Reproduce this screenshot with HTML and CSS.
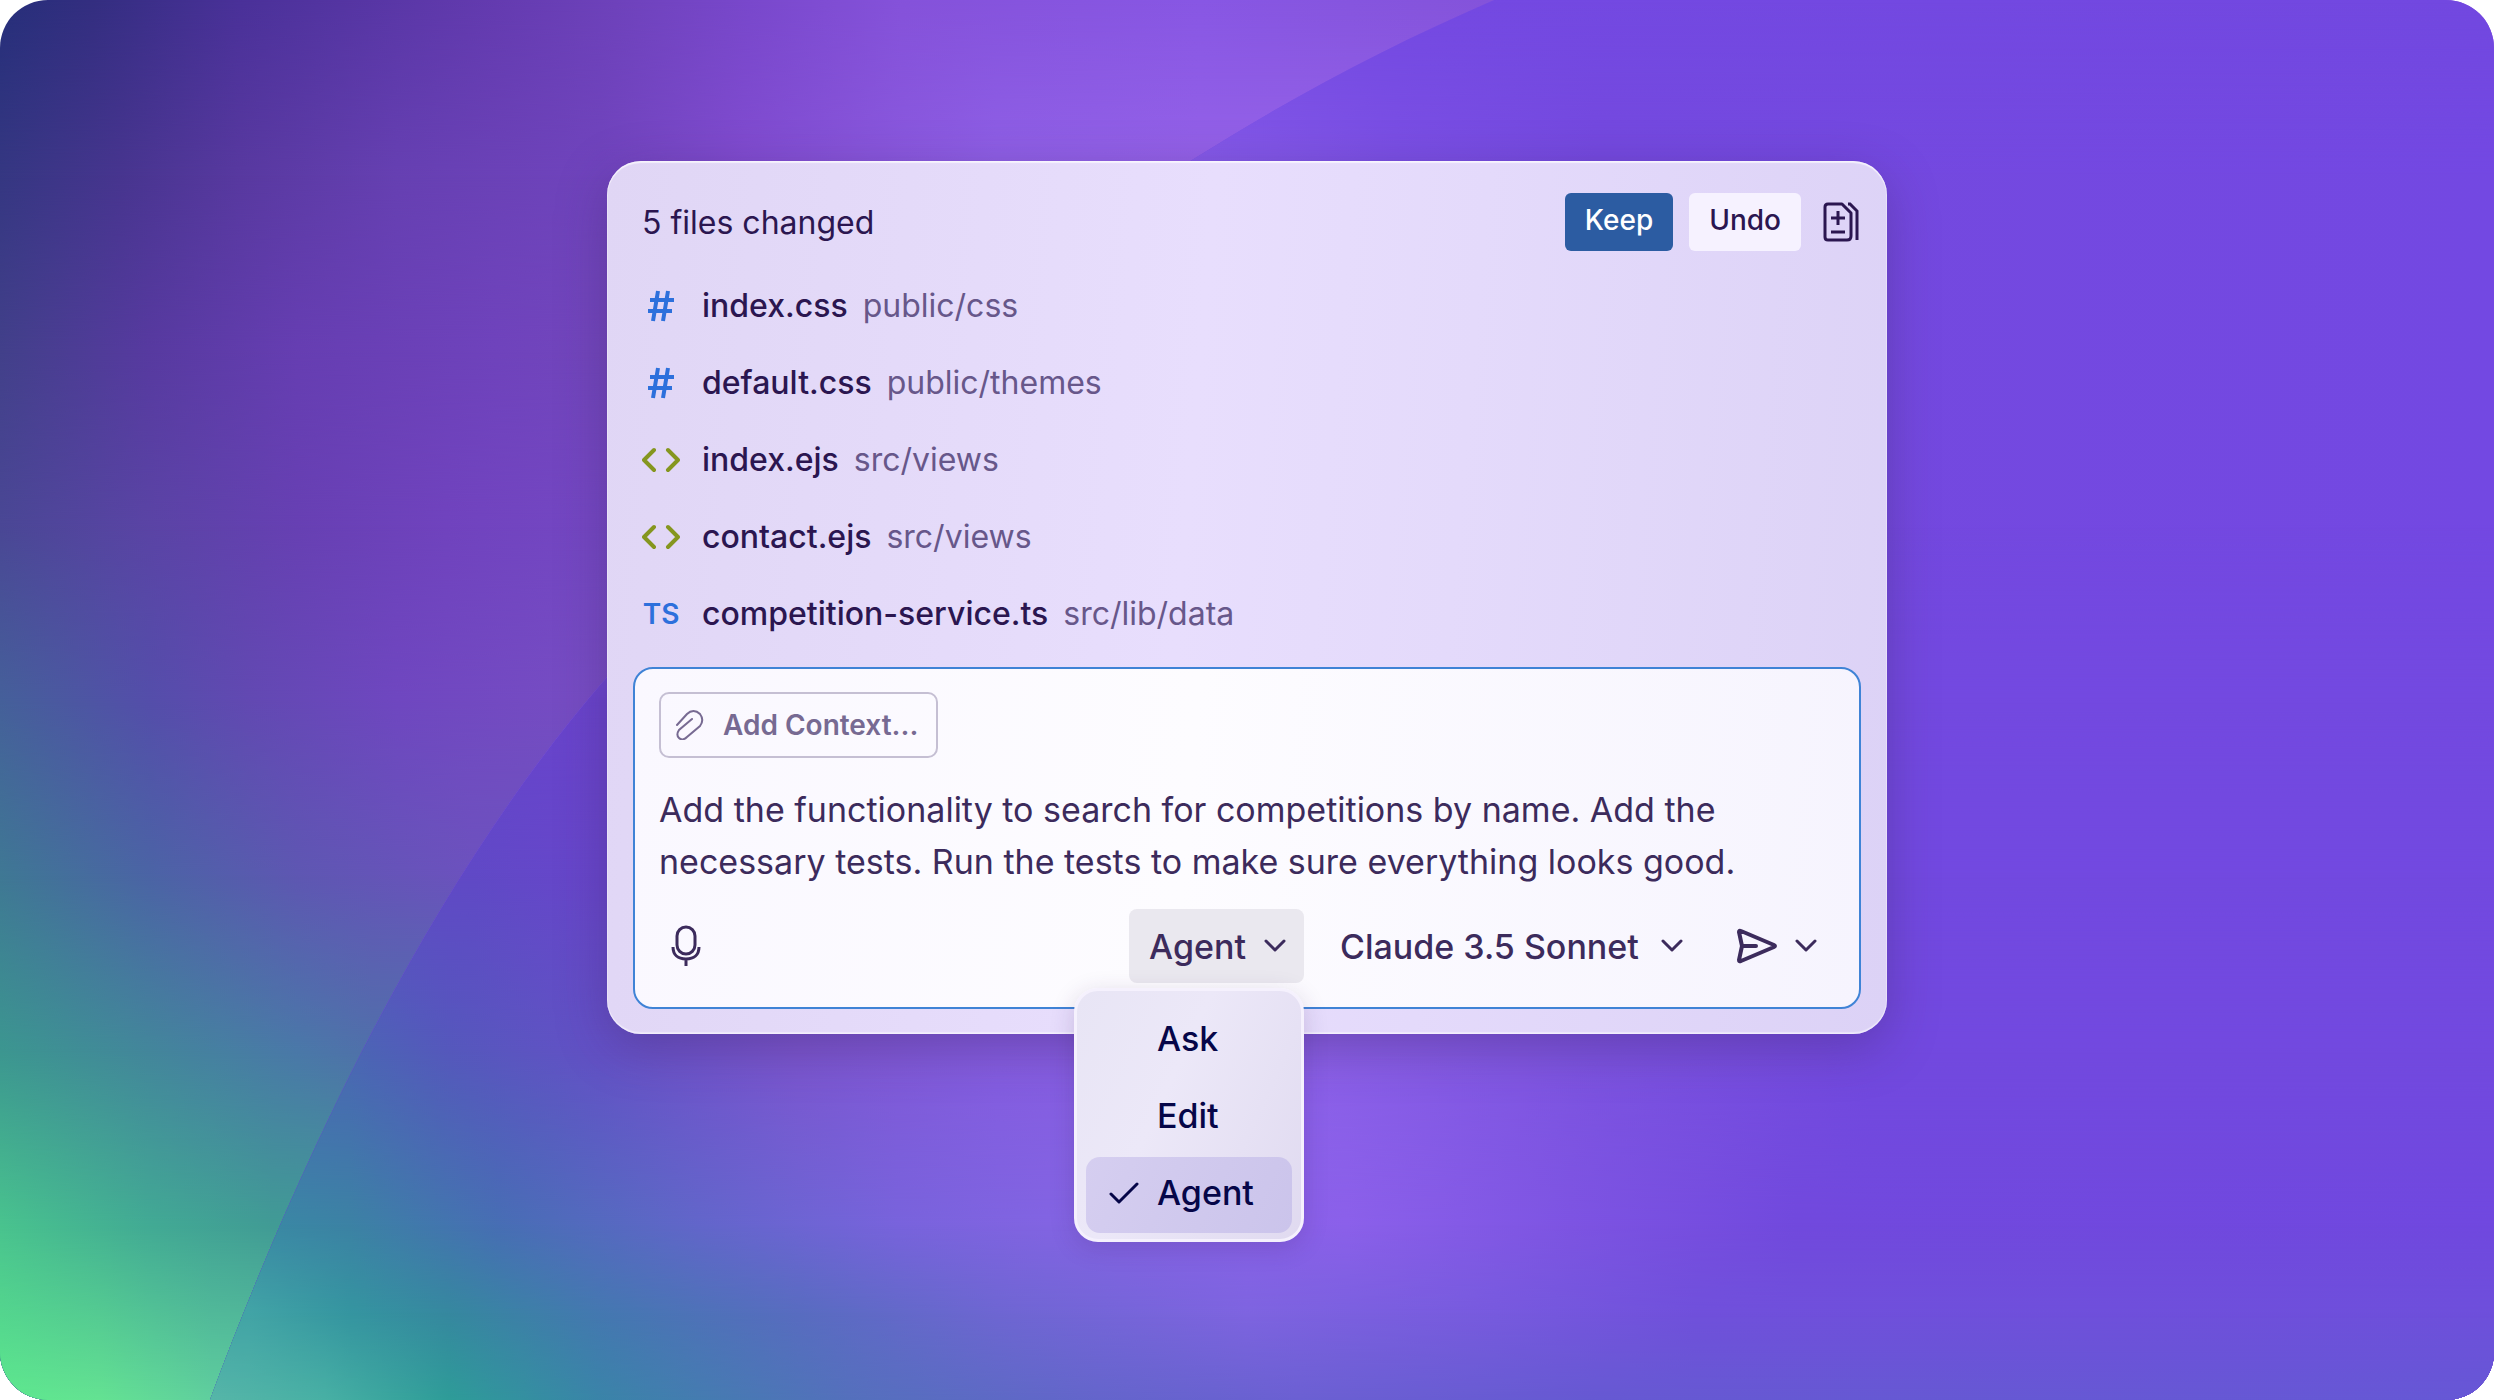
FILE: index.html
```html
<!DOCTYPE html>
<html lang="en">
<head>
<meta charset="utf-8">
<meta name="viewport" content="width=device-width, initial-scale=1">
<title>Agent mode</title>
<link rel="stylesheet" href="styles.css">
</head>
<body>
<main class="scene">
  <svg class="backdrop" viewBox="0 0 2494 1400" preserveAspectRatio="none" aria-hidden="true">
    <defs>
      <!-- Outer area: one horizontal gradient per row -->
      <linearGradient id="o0" gradientUnits="userSpaceOnUse" x1="0" x2="1500" y1="0" y2="0"><stop offset="0" stop-color="#262f7a"/><stop offset=".06" stop-color="#332e80"/><stop offset=".16" stop-color="#4a3199"/><stop offset=".33" stop-color="#643bb0"/><stop offset=".41" stop-color="#6e42bb"/><stop offset=".5" stop-color="#7948cc"/><stop offset=".6" stop-color="#8552da"/><stop offset=".8" stop-color="#8857e4"/><stop offset="1" stop-color="#8453da"/></linearGradient>
      <linearGradient id="o1" gradientUnits="userSpaceOnUse" x1="0" x2="1200" y1="0" y2="0"><stop offset="0" stop-color="#353782"/><stop offset=".1" stop-color="#47358f"/><stop offset=".2" stop-color="#5839a0"/><stop offset=".33" stop-color="#6640b2"/><stop offset=".5" stop-color="#7044bd"/><stop offset=".62" stop-color="#814cd0"/><stop offset=".83" stop-color="#8f60e6"/><stop offset="1" stop-color="#9562e8"/></linearGradient>
      <linearGradient id="o2" gradientUnits="userSpaceOnUse" x1="0" x2="620" y1="0" y2="0"><stop offset="0" stop-color="#42408a"/><stop offset=".24" stop-color="#573aa0"/><stop offset=".48" stop-color="#663eb2"/><stop offset=".8" stop-color="#6f43bc"/><stop offset="1" stop-color="#7347bd"/></linearGradient>
      <linearGradient id="o3" gradientUnits="userSpaceOnUse" x1="0" x2="620" y1="0" y2="0"><stop offset="0" stop-color="#4a4795"/><stop offset=".24" stop-color="#5a44a5"/><stop offset=".48" stop-color="#6740b3"/><stop offset=".72" stop-color="#7043be"/><stop offset="1" stop-color="#7548c4"/></linearGradient>
      <linearGradient id="o4" gradientUnits="userSpaceOnUse" x1="0" x2="620" y1="0" y2="0"><stop offset="0" stop-color="#45609a"/><stop offset=".24" stop-color="#544eaa"/><stop offset=".4" stop-color="#6249b2"/><stop offset=".64" stop-color="#6f47c0"/><stop offset="1" stop-color="#784ec4"/></linearGradient>
      <linearGradient id="o5" gradientUnits="userSpaceOnUse" x1="0" x2="620" y1="0" y2="0"><stop offset="0" stop-color="#3f7894"/><stop offset=".24" stop-color="#4b64a5"/><stop offset=".48" stop-color="#5e57b2"/><stop offset=".76" stop-color="#6c52be"/></linearGradient>
      <linearGradient id="o6" gradientUnits="userSpaceOnUse" x1="0" x2="620" y1="0" y2="0"><stop offset="0" stop-color="#3c9690"/><stop offset=".24" stop-color="#43869b"/><stop offset=".48" stop-color="#4a78a8"/><stop offset=".6" stop-color="#5070aa"/></linearGradient>
      <linearGradient id="o7" gradientUnits="userSpaceOnUse" x1="0" x2="620" y1="0" y2="0"><stop offset="0" stop-color="#49c38e"/><stop offset=".24" stop-color="#42aa94"/><stop offset=".44" stop-color="#419b95"/></linearGradient>
      <linearGradient id="o8" gradientUnits="userSpaceOnUse" x1="0" x2="620" y1="0" y2="0"><stop offset="0" stop-color="#5ee88e"/><stop offset=".16" stop-color="#64e292"/><stop offset=".34" stop-color="#60cf9e"/></linearGradient>
      <!-- Inner disc -->
      <linearGradient id="i0" gradientUnits="userSpaceOnUse" x1="1400" x2="2494" y1="0" y2="0"><stop offset="0" stop-color="#7449e2"/><stop offset="1" stop-color="#7248e0"/></linearGradient>
      <linearGradient id="i1" gradientUnits="userSpaceOnUse" x1="0" x2="2494" y1="0" y2="0"><stop offset=".478" stop-color="#875ce9"/><stop offset=".56" stop-color="#7b50e4"/><stop offset=".64" stop-color="#7449de"/><stop offset="1" stop-color="#7348e2"/></linearGradient>
      <linearGradient id="i2" gradientUnits="userSpaceOnUse" x1="0" x2="2494" y1="0" y2="0"><stop offset=".2" stop-color="#6744cc"/><stop offset=".24" stop-color="#6a44cc"/><stop offset=".7" stop-color="#7349e0"/></linearGradient>
      <linearGradient id="i3" gradientUnits="userSpaceOnUse" x1="0" x2="2494" y1="0" y2="0"><stop offset=".19" stop-color="#6049c6"/><stop offset=".24" stop-color="#6846cb"/><stop offset=".7" stop-color="#7249e0"/></linearGradient>
      <linearGradient id="i4" gradientUnits="userSpaceOnUse" x1="0" x2="2494" y1="0" y2="0"><stop offset=".14" stop-color="#4b66b4"/><stop offset=".18" stop-color="#5558bc"/><stop offset=".24" stop-color="#6351c6"/><stop offset=".32" stop-color="#7c56d0"/><stop offset=".4" stop-color="#855ce0"/><stop offset=".53" stop-color="#8b60e8"/><stop offset=".64" stop-color="#7c53e0"/><stop offset=".75" stop-color="#7249df"/></linearGradient>
      <linearGradient id="i5" gradientUnits="userSpaceOnUse" x1="0" x2="2494" y1="0" y2="0"><stop offset=".11" stop-color="#3a88a4"/><stop offset=".14" stop-color="#3c82a4"/><stop offset=".2" stop-color="#476eb4"/><stop offset=".28" stop-color="#6266ca"/><stop offset=".36" stop-color="#7863dc"/><stop offset=".42" stop-color="#8264e2"/><stop offset=".54" stop-color="#8b60ea"/><stop offset=".63" stop-color="#7d54e2"/><stop offset=".72" stop-color="#7149dd"/><stop offset="1" stop-color="#7048df"/></linearGradient>
      <linearGradient id="i6" gradientUnits="userSpaceOnUse" x1="0" x2="2494" y1="0" y2="0"><stop offset=".1" stop-color="#42a4a6"/><stop offset=".14" stop-color="#3595a0"/><stop offset=".18" stop-color="#36889f"/><stop offset=".24" stop-color="#4478b0"/><stop offset=".32" stop-color="#586cc0"/><stop offset=".4" stop-color="#6e66d2"/><stop offset=".5" stop-color="#7e64e0"/><stop offset=".6" stop-color="#775ade"/><stop offset=".68" stop-color="#7050db"/><stop offset="1" stop-color="#6e4fdb"/></linearGradient>
      <linearGradient id="i7" gradientUnits="userSpaceOnUse" x1="0" x2="2494" y1="0" y2="0"><stop offset=".084" stop-color="#56b6a8"/><stop offset=".13" stop-color="#48b0a4"/><stop offset=".18" stop-color="#2e9c98"/><stop offset=".24" stop-color="#3a84a8"/><stop offset=".34" stop-color="#5470bc"/><stop offset=".44" stop-color="#6465cb"/><stop offset=".52" stop-color="#6b60d2"/><stop offset=".64" stop-color="#6659d2"/><stop offset="1" stop-color="#6658d5"/></linearGradient>

      <!-- Vertical fades that blend each row into the next -->
      <linearGradient id="fade" x1="0" x2="0" y1="0" y2="1"><stop offset="0" stop-color="#000"/><stop offset="1" stop-color="#fff"/></linearGradient>
      <g id="ramp"><rect width="2494" height="175" fill="url(#fade)"/><rect y="175" width="2494" height="1400" fill="#fff"/></g>
      <mask id="m0" maskUnits="userSpaceOnUse" x="0" y="0" width="2494" height="1400"><use href="#ramp"/></mask>
      <mask id="m175" maskUnits="userSpaceOnUse" x="0" y="175" width="2494" height="1225"><use href="#ramp" y="175"/></mask>
      <mask id="m350" maskUnits="userSpaceOnUse" x="0" y="350" width="2494" height="1050"><use href="#ramp" y="350"/></mask>
      <mask id="m525" maskUnits="userSpaceOnUse" x="0" y="525" width="2494" height="875"><use href="#ramp" y="525"/></mask>
      <mask id="m700" maskUnits="userSpaceOnUse" x="0" y="700" width="2494" height="700"><use href="#ramp" y="700"/></mask>
      <mask id="m875" maskUnits="userSpaceOnUse" x="0" y="875" width="2494" height="525"><use href="#ramp" y="875"/></mask>
      <mask id="m1050" maskUnits="userSpaceOnUse" x="0" y="1050" width="2494" height="350"><use href="#ramp" y="1050"/></mask>
      <mask id="m1225" maskUnits="userSpaceOnUse" x="0" y="1225" width="2494" height="175"><use href="#ramp" y="1225"/></mask>
      <mask id="m1225b" maskUnits="userSpaceOnUse" x="0" y="1225" width="2494" height="175"><rect y="1225" width="2494" height="88" fill="url(#fade)"/><rect y="1313" width="2494" height="87" fill="#fff"/></mask>
      <mask id="m1313" maskUnits="userSpaceOnUse" x="0" y="1313" width="2494" height="87"><rect y="1313" width="2494" height="87" fill="url(#fade)"/></mask>
      <clipPath id="disc"><path d="M210 1400C295 1170 430 880 607 677C780 455 980 290 1192 160C1290 98 1390 45 1494 0H2494V1400Z"/></clipPath>
    </defs>
    <g>
      <rect width="2494" height="1400" fill="url(#o0)"/>
      <rect width="2494" height="1400" fill="url(#o1)" mask="url(#m0)"/>
      <rect width="2494" height="1400" fill="url(#o2)" mask="url(#m175)"/>
      <rect width="2494" height="1400" fill="url(#o3)" mask="url(#m350)"/>
      <rect width="2494" height="1400" fill="url(#o4)" mask="url(#m525)"/>
      <rect width="2494" height="1400" fill="url(#o5)" mask="url(#m700)"/>
      <rect width="2494" height="1400" fill="url(#o6)" mask="url(#m875)"/>
      <rect width="2494" height="1400" fill="url(#o7)" mask="url(#m1050)"/>
      <rect width="2494" height="1400" fill="url(#o8)" mask="url(#m1225)"/>
    </g>
    <g clip-path="url(#disc)">
      <rect width="2494" height="1400" fill="url(#i0)"/>
      <rect width="2494" height="1400" fill="url(#i1)" mask="url(#m0)"/>
      <rect width="2494" height="1400" fill="url(#i2)" mask="url(#m525)"/>
      <rect width="2494" height="1400" fill="url(#i3)" mask="url(#m700)"/>
      <rect width="2494" height="1400" fill="url(#i4)" mask="url(#m875)"/>
      <rect width="2494" height="1400" fill="url(#i5)" mask="url(#m1050)"/>
      <rect width="2494" height="1400" fill="url(#i6)" mask="url(#m1225b)"/>
      <rect width="2494" height="1400" fill="url(#i7)" mask="url(#m1313)"/>
    </g>
  </svg>

  <section class="panel" aria-labelledby="changes-title">
    <header class="panel-header">
      <h1 class="panel-title" id="changes-title">5 files changed</h1>
      <div class="panel-actions">
        <button class="btn btn-primary" type="button">Keep</button>
        <button class="btn btn-secondary" type="button">Undo</button>
        <button class="icon-btn" type="button" aria-label="View all edits">
          <svg width="36" height="40" viewBox="0 0 36 40" fill="none" stroke="currentColor" stroke-width="3" aria-hidden="true">
            <path d="M5 2H19L28 11V34Q28 38 24 38H5Q2 38 2 35V5Q2 2 5 2Z" stroke-linejoin="round"/>
            <path d="M25 2H27L34 9V38M15 9V23M8 16H22M8 30H22"/>
          </svg>
        </button>
      </div>
    </header>

    <ul class="files">
      <li class="file"><span class="file-icon hash">
        <svg width="28" height="32" viewBox="0 0 28 32" fill="none" stroke="currentColor" stroke-width="4" aria-hidden="true"><path d="M11 1L6 31M21 1L16 31M3 10H27M1 21H25"/></svg>
      </span><a class="file-name" href="#">index.css</a><span class="file-path">public/css</span></li>
      <li class="file"><span class="file-icon hash">
        <svg width="28" height="32" viewBox="0 0 28 32" fill="none" stroke="currentColor" stroke-width="4" aria-hidden="true"><path d="M11 1L6 31M21 1L16 31M3 10H27M1 21H25"/></svg>
      </span><a class="file-name" href="#">default.css</a><span class="file-path">public/themes</span></li>
      <li class="file"><span class="file-icon markup">
        <svg width="38" height="26" viewBox="0 0 38 26" fill="none" stroke="currentColor" stroke-width="4" stroke-linecap="round" stroke-linejoin="round" aria-hidden="true"><path d="M12 3L2 13L12 23M26 3L36 13L26 23"/></svg>
      </span><a class="file-name" href="#">index.ejs</a><span class="file-path">src/views</span></li>
      <li class="file"><span class="file-icon markup">
        <svg width="38" height="26" viewBox="0 0 38 26" fill="none" stroke="currentColor" stroke-width="4" stroke-linecap="round" stroke-linejoin="round" aria-hidden="true"><path d="M12 3L2 13L12 23M26 3L36 13L26 23"/></svg>
      </span><a class="file-name" href="#">contact.ejs</a><span class="file-path">src/views</span></li>
      <li class="file"><span class="file-icon ts">TS</span><a class="file-name" href="#">competition-service.ts</a><span class="file-path">src/lib/data</span></li>
    </ul>

    <form class="composer">
      <button class="context-btn" type="button">
        <svg width="30" height="30" viewBox="0 0 30 30" fill="none" stroke="currentColor" stroke-width="2" stroke-linecap="round" aria-hidden="true"><path d="M2 15L12 4C16 0 21 0 25 4C28 8 28 12 25 16L12 27C9 30 6 30 4 28C2 26 2 23 4 20L17 9"/></svg>
        Add Context...
      </button>
      <textarea class="prompt" rows="2" aria-label="Prompt">Add the functionality to search for competitions by name. Add the necessary tests. Run the tests to make sure everything looks good.</textarea>
      <div class="toolbar">
        <button class="icon-btn mic" type="button" aria-label="Voice input">
          <svg width="30" height="42" viewBox="0 0 30 42" fill="none" stroke="currentColor" stroke-width="3" aria-hidden="true"><rect x="6" y="2" width="18" height="27" rx="9"/><path d="M2 22C2 30 7 34 15 34S28 30 28 22M15 34V41"/></svg>
        </button>
        <div class="mode">
          <button class="mode-btn" type="button" aria-haspopup="listbox" aria-expanded="true">Agent
            <svg width="22" height="14" viewBox="0 0 22 14" fill="none" stroke="currentColor" stroke-width="3" stroke-linecap="round" stroke-linejoin="round" aria-hidden="true"><path d="M2 2L11 11L20 2"/></svg>
          </button>
          <div class="menu" role="listbox" aria-label="Mode">
            <button class="menu-item" type="button" role="option" aria-selected="false">Ask</button>
            <button class="menu-item" type="button" role="option" aria-selected="false">Edit</button>
            <button class="menu-item selected" type="button" role="option" aria-selected="true">
              <svg class="check" width="30" height="22" viewBox="0 0 30 22" fill="none" stroke="currentColor" stroke-width="3" stroke-linecap="round" stroke-linejoin="round" aria-hidden="true"><path d="M2 12L10 20L28 2"/></svg>Agent</button>
          </div>
        </div>
        <label class="model">
          <select class="model-select" aria-label="Model"><option>Claude 3.5 Sonnet</option></select>
          <svg width="22" height="14" viewBox="0 0 22 14" fill="none" stroke="currentColor" stroke-width="3" stroke-linecap="round" stroke-linejoin="round" aria-hidden="true"><path d="M2 2L11 11L20 2"/></svg>
        </label>
        <div class="send">
          <button class="icon-btn" type="submit" aria-label="Send">
            <svg width="42" height="36" viewBox="0 0 42 36" fill="none" stroke="currentColor" stroke-width="4" stroke-linejoin="round" stroke-linecap="round" aria-hidden="true"><path d="M3 4Q3 2 5 3L38 17Q40 18 38 19L5 33Q3 34 3 32L6 18ZM6 18H20"/></svg>
          </button>
          <button class="icon-btn" type="button" aria-label="Send options">
            <svg width="22" height="14" viewBox="0 0 22 14" fill="none" stroke="currentColor" stroke-width="3" stroke-linecap="round" stroke-linejoin="round" aria-hidden="true"><path d="M2 2L11 11L20 2"/></svg>
          </button>
        </div>
      </div>
    </form>
  </section>
</main>
</body>
</html>
```
FILE: styles.css
```css
* {
  box-sizing: border-box;
}

body {
  margin: 0;
  background: #fff;
  color: #2b1650;
  font-family: Inter, "Liberation Sans", sans-serif;
  font-size: 32px;
}

button,
select,
textarea {
  margin: 0;
  padding: 0;
  border: 0;
  background: none;
  color: inherit;
  font: inherit;
}

svg {
  display: block;
  flex: none;
}

.scene {
  position: relative;
  display: flex;
  justify-content: center;
  align-items: flex-start;
  min-height: 100vh;
  padding: 161px 32px;
  border-radius: 48px;
  overflow: hidden;
}

.backdrop {
  position: absolute;
  inset: 0;
  width: 100%;
  height: 100%;
}

.panel {
  position: relative;
  width: 100%;
  max-width: 1280px;
  padding: 32px 26px 25px;
  border-radius: 34px;
  background: linear-gradient(95deg, #e0d6f5, #e8defd 45%, #e4dafb 65%, #dcd2f6);
  box-shadow: inset 0 2px 1px rgba(255, 255, 255, .6), inset 0 -2px 1px rgba(255, 255, 255, .4), inset 0 0 0 1px rgba(255, 255, 255, .25), 0 14px 50px rgba(60, 35, 90, .34);
}

.panel-header {
  display: flex;
  align-items: flex-start;
  justify-content: space-between;
  padding: 0 2px 0 9px;
}

.panel-title {
  margin: 0;
  font-size: 32px;
  font-weight: 400;
  line-height: 60px;
}

.panel-actions {
  display: flex;
  align-items: center;
  gap: 16px;
}

.btn {
  height: 58px;
  padding: 0 20px 4px;
  border-radius: 6px;
  font-size: 28px;
  font-weight: 500;
  line-height: 54px;
}

.btn-primary {
  background: #2c5ca2;
  color: #fff;
}

.btn-secondary {
  background: #f6f2ff;
}

.icon-btn {
  display: flex;
  align-items: center;
}

.panel-actions .icon-btn {
  margin-left: 6px;
}

.files {
  display: grid;
  margin: 0;
  padding: 14px 9px 15px;
  list-style: none;
}

.file {
  display: flex;
  align-items: center;
  height: 77px;
  line-height: 40px;
}

.file-icon {
  display: flex;
  justify-content: center;
  width: 38px;
  margin-right: 22px;
}

.hash {
  color: #2d70dc;
}

.markup {
  color: #85961f;
}

.ts {
  color: #2d70dc;
  font-size: 28px;
  font-weight: 600;
}

.file-name {
  margin-right: 15px;
  color: inherit;
  font-weight: 500;
  text-decoration: none;
}

.file-path {
  color: #67578a;
}

.composer {
  display: flex;
  flex-direction: column;
  align-items: flex-start;
  padding: 23px 24px 24px;
  border: 2px solid #3f83d6;
  border-radius: 20px;
  background: linear-gradient(95deg, #faf8ff, #fdfcff 45%, #f6f4fe);
  color: #3c2b5c;
}

.context-btn {
  display: flex;
  align-items: center;
  gap: 18px;
  height: 66px;
  padding: 0 18px 0 14px;
  border: 2px solid #c5bfd3;
  border-radius: 10px;
  color: #776a92;
  font-size: 28px;
  font-weight: 600;
}

.prompt {
  width: 100%;
  height: 104px;
  margin: 26px 0 21px;
  overflow: hidden;
  outline: 0;
  font-size: 34px;
  line-height: 52px;
  resize: none;
}

.toolbar {
  display: flex;
  align-items: center;
  align-self: stretch;
  padding-right: 18px;
  font-size: 34px;
  font-weight: 500;
}

.mic {
  margin-right: auto;
  padding-left: 12px;
}

.mode {
  position: relative;
}

.mode-btn {
  display: flex;
  align-items: center;
  gap: 18px;
  height: 74px;
  padding: 0 18px 0 20px;
  border-radius: 8px;
  background: #eae8ef;
}

.model {
  display: grid;
  align-items: center;
  margin: 0 53px 0 36px;
}

.model > * {
  grid-area: 1 / 1;
}

.model-select {
  padding-right: 44px;
  appearance: none;
}

.model > svg {
  justify-self: end;
  pointer-events: none;
}

.send {
  display: flex;
  align-items: center;
  gap: 17px;
}

.menu {
  position: absolute;
  top: calc(100% + 5px);
  right: 0;
  display: grid;
  gap: 1px;
  width: 230px;
  padding: 12px 9px 6px;
  border: 3px solid #f5f1fd;
  border-radius: 24px;
  background: linear-gradient(115deg, #e8e5f5, #ece8f8 40%, #e0daf0);
  box-shadow: 0 6px 24px rgba(60, 35, 90, .18);
  color: #060648;
}

.menu-item {
  position: relative;
  height: 76px;
  padding: 0 0 6px 71px;
  border-radius: 14px;
  text-align: left;
}

.selected {
  background: linear-gradient(115deg, #d5cef0, #cbc4eb);
}

.check {
  position: absolute;
  top: 25px;
  left: 23px;
}
```
